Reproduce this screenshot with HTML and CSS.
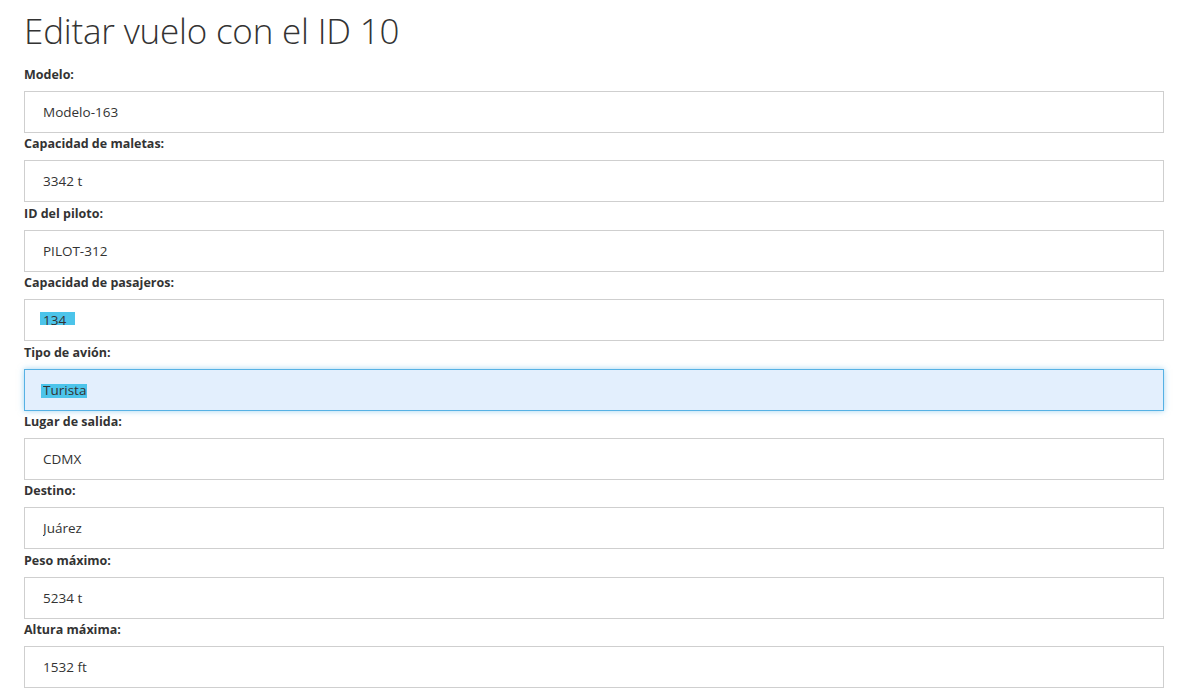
FILE: index.html
```html
<!DOCTYPE html>
<html lang="es">
<head>
<meta charset="utf-8">
<title>Editar vuelo</title>
<link rel="stylesheet" href="styles.css">
</head>
<body>
<main class="page">
  <h1 class="title">Editar vuelo con el ID 10</h1>
  <form class="form">
    <div class="group">
      <label class="label" for="modelo">Modelo:</label>
      <input class="input" id="modelo" type="text" value="Modelo-163">
    </div>
    <div class="group">
      <label class="label" for="maletas">Capacidad de maletas:</label>
      <input class="input" id="maletas" type="text" value="3342 t">
    </div>
    <div class="group">
      <label class="label" for="piloto">ID del piloto:</label>
      <input class="input" id="piloto" type="text" value="PILOT-312">
    </div>
    <div class="group">
      <label class="label" for="pasajeros">Capacidad de pasajeros:</label>
      <input class="input sel-pasajeros" id="pasajeros" type="text" value="134">
    </div>
    <div class="group">
      <label class="label" for="tipo">Tipo de avión:</label>
      <input class="input focused sel-tipo" id="tipo" type="text" value="Turista">
    </div>
    <div class="group">
      <label class="label" for="salida">Lugar de salida:</label>
      <input class="input" id="salida" type="text" value="CDMX">
    </div>
    <div class="group">
      <label class="label" for="destino">Destino:</label>
      <input class="input" id="destino" type="text" value="Juárez">
    </div>
    <div class="group">
      <label class="label" for="peso">Peso máximo:</label>
      <input class="input" id="peso" type="text" value="5234 t">
    </div>
    <div class="group">
      <label class="label" for="altura">Altura máxima:</label>
      <input class="input" id="altura" type="text" value="1532 ft">
    </div>
  </form>
</main>
</body>
</html>
```

FILE: styles.css
```css
* { box-sizing: border-box; }
html, body { margin: 0; padding: 0; background: #fff; }
body {
  font-family: "Open Sans", "Noto Sans", sans-serif;
  color: #333;
  overflow: hidden;
}
.page {
  padding: 0 21px 0 24px;
}
.title {
  font-family: "Open Sans", "Noto Sans", sans-serif;
  font-weight: 300;
  font-size: 35px;
  line-height: 50px;
  margin: 6px 0 8px;
  color: #333;
  letter-spacing: -0.2px;
}
.form {
  display: flex;
  flex-direction: column;
}
.group {
  display: flex;
  flex-direction: column;
  height: 69.4px;
}
.label {
  display: block;
  font-size: 12.5px;
  font-weight: 700;
  line-height: 18px;
  padding: 2px 0 7px;
  color: #333;
}
.input {
  display: block;
  width: 100%;
  height: 42px;
  border: 1px solid #cfcfcf;
  background: #fff;
  padding: 0 18px;
  font-family: "Open Sans", "Noto Sans", sans-serif;
  font-size: 13.5px;
  color: #333;
  outline: none;
  border-radius: 0;
}
.focused {
  background-color: #e3effd;
  border-color: #56b1e4;
  box-shadow: 0 0 6px rgba(86, 177, 228, 0.55);
}
.sel-pasajeros {
  background: linear-gradient(#4cc4ea, #4cc4ea) no-repeat 15px 12px / 35px 13px, #fff;
}
.sel-tipo {
  background: linear-gradient(#4cc4ea, #4cc4ea) no-repeat 16px 14px / 46px 14px, #e3effd;
}
```
